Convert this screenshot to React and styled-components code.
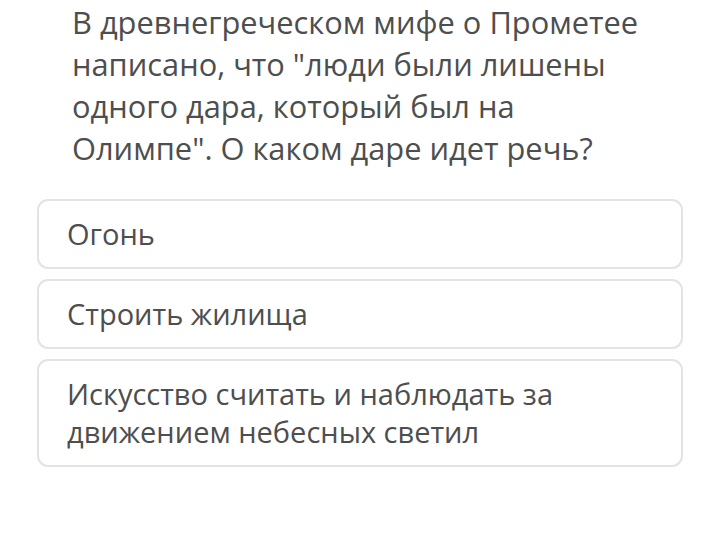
import React from "react";
import styled, { createGlobalStyle } from "styled-components";

const Global = createGlobalStyle`
  html, body { margin: 0; padding: 0; background: #ffffff; }
  body { font-family: "Open Sans", "Noto Sans", sans-serif; }
`;

const Page = styled.div`
  width: 720px;
  height: 535px;
  overflow: hidden;
  background: #fff;
  display: flex;
  flex-direction: column;
  padding: 0 37px;
  box-sizing: border-box;
`;

const Question = styled.p`
  margin: 1px 0 0 0;
  padding: 0 35px;
  font-size: 30.8px;
  line-height: 42px;
  color: #4d4e4e;
  font-weight: 400;
`;

const Options = styled.div`
  margin-top: 30px;
  display: flex;
  flex-direction: column;
  gap: 10px;
`;

const Option = styled.div`
  border: 2px solid #e3e3e3;
  border-radius: 11px;
  padding: 14px 28px 14px;
  font-size: 29px;
  line-height: 38px;
  color: #4d4e4e;
`;

const options = [
  "Огонь",
  "Строить жилища",
  "Искусство считать и наблюдать за движением небесных светил",
];

export default function App() {
  return (
    <>
      <Global />
      <Page>
        <Question>
          В древнегреческом мифе о Прометее написано, что "люди были лишены
          одного дара, который был на Олимпе". О каком даре идет речь?
        </Question>
        <Options>
          {options.map((text) => (
            <Option key={text}>{text}</Option>
          ))}
        </Options>
      </Page>
    </>
  );
}
